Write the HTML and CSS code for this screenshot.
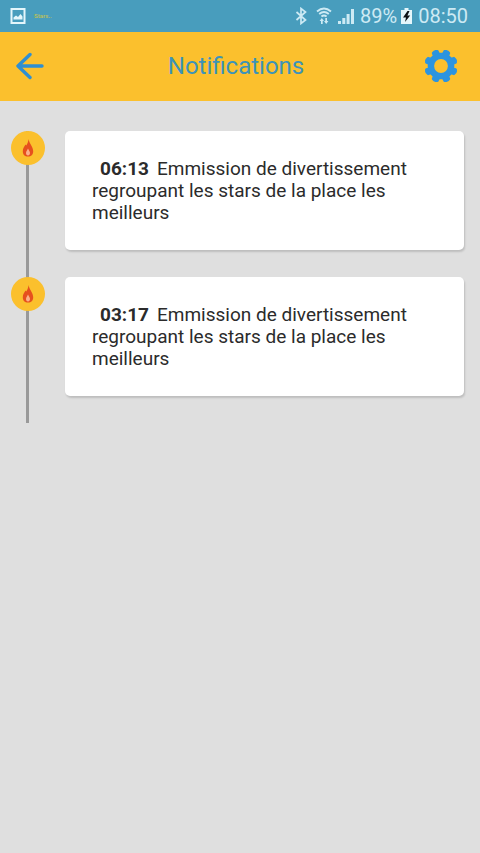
FILE: index.html
```html
<!DOCTYPE html>
<html lang="fr">
<head>
<meta charset="utf-8">
<meta name="viewport" content="width=device-width, initial-scale=1">
<title>Notifications</title>
<link rel="stylesheet" href="styles.css">
</head>
<body>
<div class="status">
  <svg class="status-picture" viewBox="0 0 16 16" width="16" height="16" aria-hidden="true">
    <path fill="none" stroke="#e4f6fb" stroke-width="2" d="M1.500 1h13v14h-13z"/>
    <path fill="#e4f6fb" d="M3.500 11.500V9.500L6 7.500l2 1.500 2.500-3 2 2.500v3z"/>
  </svg>
  <span class="status-app">Stars..</span>
  <svg class="status-bluetooth" viewBox="0 0 12 18" width="12" height="18" aria-hidden="true">
    <path fill="none" stroke="#cdeaf4" stroke-width="1.700" d="M1.500 5l9 8L6 16.500v-15L10.500 5l-9 8"/>
  </svg>
  <svg class="status-wifi" viewBox="0 0 16 18" width="16" height="18" aria-hidden="true">
    <g fill="none" stroke="#cdeaf4" stroke-width="1.900">
      <path d="M1 4.500Q8-1.500 15 4.500M3.200 7Q8 3 12.800 7M5.400 9.500Q8 7.500 10.600 9.500"/>
    </g>
    <path fill="#cdeaf4" d="M5.800 11L8 14H6.700v3H5v-3H3.600zM10.200 17L8 14h1.300v-3H11v3h1.400z"/>
  </svg>
  <svg class="status-signal" viewBox="0 0 16 16" width="16" height="16" aria-hidden="true">
    <path fill="#cdeaf4" d="M0 13h3v3H0zM4.300 10h3v6h-3zM8.600 6h3v10h-3zM13 1h3v15h-3z"/>
  </svg>
  <span class="status-text">89%</span>
  <svg class="status-battery" viewBox="0 0 11 16" width="11" height="16" aria-hidden="true">
    <path fill="#e4f6fb" d="M3.500 0h4v2H11v14H0V2h3.500z"/>
    <path fill="#0c1216" d="M6.500 3L2 9.500h3L4 14l5.200-6.500H6.400L8.500 3z"/>
  </svg>
  <span class="status-text">08:50</span>
</div>
<header class="bar">
  <button class="icon-button icon-button-back" type="button" aria-label="Retour">
    <svg viewBox="0 0 28 28" width="28" height="28" aria-hidden="true">
      <path fill="none" stroke="#2e8fd2" stroke-width="3.400" stroke-linecap="round" stroke-linejoin="round" d="M14 2.500L2 14l12 11.500M2.500 14H26"/>
    </svg>
  </button>
  <h1 class="title">Notifications</h1>
  <button class="icon-button" type="button" aria-label="Paramètres">
    <svg viewBox="-16 -16 32 32" width="34" height="34" aria-hidden="true">
      <g fill="#2c94e0">
        <path id="teeth" stroke="#2c94e0" stroke-width="2" stroke-linejoin="round" d="M-6-10L-5.200-14L-3.200-14L-2-11.500H2L3.200-14L5.200-14L6-10zM6 10L5.200 14L3.200 14L2 11.500H-2L-3.200 14L-5.200 14L-6 10z"/>
        <use href="#teeth" transform="rotate(45)"/>
        <use href="#teeth" transform="rotate(90)"/>
        <use href="#teeth" transform="rotate(135)"/>
        <circle r="11.500"/>
      </g>
      <circle r="6.500" fill="#fbc02d"/>
    </svg>
  </button>
</header>
<main>
  <ol class="timeline">
    <li class="entry">
      <div class="rail">
        <span class="dot">
          <svg class="flame" viewBox="0 0 12 18" width="12" height="18" aria-hidden="true">
            <path fill="#e6501e" d="M6.500 0C7 4 11.200 8 11.200 12.200c0 3.300-2 5.300-5.200 5.300S.8 15.500.8 12.200C.8 9.500 2 8 3.500 5.500l.7 1C5.300 5 6.300 3 6.500 0z"/>
            <path fill="#fbb08a" d="M6 9.500c.5 1.500 2 2.700 2 4.500 0 1.500-.8 2.400-2 2.400s-2-.9-2-2.400C4 12.200 5.500 11 6 9.500z"/>
          </svg>
        </span>
      </div>
      <p class="card"><time class="time">06:13</time>Emmission de divertissement regroupant les stars de la place les meilleurs</p>
    </li>
    <li class="entry">
      <div class="rail">
        <span class="dot">
          <svg class="flame" viewBox="0 0 12 18" width="12" height="18" aria-hidden="true">
            <path fill="#e6501e" d="M6.500 0C7 4 11.200 8 11.200 12.200c0 3.300-2 5.300-5.200 5.300S.8 15.500.8 12.200C.8 9.500 2 8 3.500 5.500l.7 1C5.300 5 6.300 3 6.500 0z"/>
            <path fill="#fbb08a" d="M6 9.500c.5 1.500 2 2.700 2 4.500 0 1.500-.8 2.400-2 2.400s-2-.9-2-2.400C4 12.200 5.500 11 6 9.500z"/>
          </svg>
        </span>
      </div>
      <p class="card"><time class="time">03:17</time>Emmission de divertissement regroupant les stars de la place les meilleurs</p>
    </li>
  </ol>
</main>
</body>
</html>
```
FILE: styles.css
```css
* {
  box-sizing: border-box;
}

body {
  margin: 0;
  min-height: 100vh;
  background: #dfdfdf;
  color: #2b2b2b;
  font-family: Roboto, "Liberation Sans", sans-serif;
}

.status {
  display: flex;
  align-items: center;
  height: 32px;
  padding: 0 12px 0 10px;
  background: #489dbd;
  color: #cdeaf4;
}

.status-app {
  margin: 0 auto 0 8px;
  color: #b5bd62;
  font-size: 6px;
  font-weight: 700;
  line-height: 8px;
}

.status-bluetooth {
  margin-right: 9px;
}

.status-wifi {
  margin-right: 6px;
}

.status-signal {
  margin-right: 6px;
}

.status-battery {
  margin: 0 6px 0 4px;
}

.status-text {
  font-size: 20px;
  line-height: 24px;
}

.bar {
  display: flex;
  align-items: center;
  justify-content: space-between;
  height: 69px;
  padding: 0 22px 2px 16px;
  background: #fbc02d;
}

.icon-button {
  display: flex;
  padding: 0;
  border: 0;
  background: none;
}

.icon-button-back {
  width: 32px;
}

.title {
  margin: 0;
  color: #3d93b8;
  font-size: 24px;
  font-weight: 400;
  line-height: 28px;
}

.timeline {
  margin: 0;
  padding: 30px 16px 0 11px;
  list-style: none;
}

.entry {
  display: flex;
  align-items: stretch;
  gap: 20px;
}

.rail {
  flex: none;
  width: 34px;
  background: linear-gradient(#999, #999) 15px 0 / 3px 100% no-repeat;
}

.dot {
  display: flex;
  align-items: center;
  justify-content: center;
  height: 34px;
  border-radius: 50%;
  background: #fbc02d;
}

.card {
  flex: 1;
  margin: 0 0 27px;
  padding: 27px 27px 26px;
  border-radius: 5px;
  background: #fff;
  box-shadow: 1px 2px 2px rgba(0, 0, 0, 0.15);
  font-size: 19px;
  line-height: 22px;
}

.time {
  margin: 0 8px;
  font-weight: 700;
}
```
